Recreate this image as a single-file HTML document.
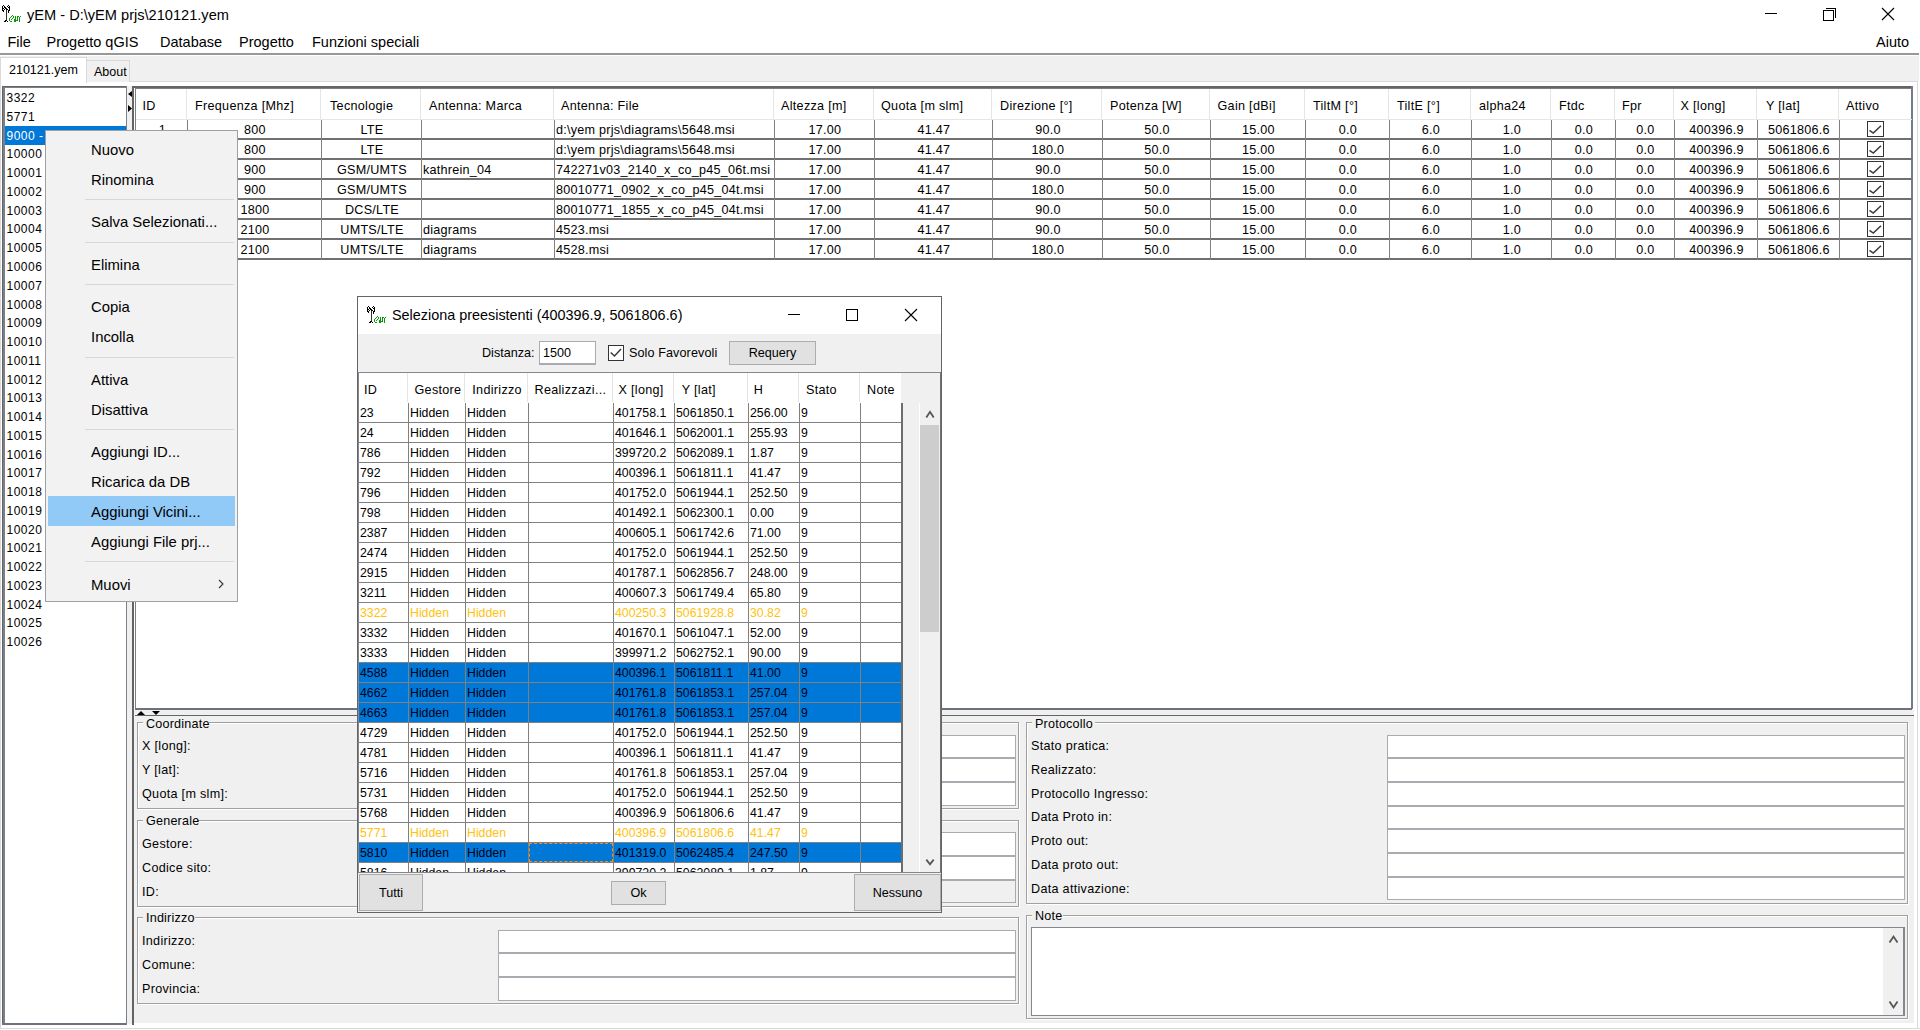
<!DOCTYPE html>
<html><head><meta charset="utf-8"><title>yEM</title>
<style>
html,body{margin:0;padding:0;}
body{width:1920px;height:1030px;overflow:hidden;position:relative;background:#fff;font-family:"Liberation Sans", sans-serif;color:#000;}
body div, body svg{position:absolute;}
body div{white-space:pre;}
</style></head><body>
<div style="left:0px;top:0px;width:1920px;height:53px;background:#fff"></div>
<div style="left:0px;top:53px;width:1919px;height:2px;background:#989898"></div>
<svg style="left:0px;top:0px" width="22" height="23" viewBox="0 0 22 23" shape-rendering="crispEdges"><g fill="#000"><rect x="2" y="6" width="1" height="5"/><rect x="3" y="5" width="1" height="1"/><rect x="4" y="6" width="1" height="2"/><rect x="3" y="8" width="1" height="1"/><rect x="4" y="9" width="1" height="1"/><rect x="3" y="10" width="1" height="2"/><rect x="9" y="6" width="1" height="5"/><rect x="8" y="5" width="1" height="1"/><rect x="7" y="6" width="1" height="1"/><rect x="8" y="7" width="1" height="1"/><rect x="7" y="9" width="1" height="1"/><rect x="8" y="10" width="1" height="3"/><rect x="5" y="7" width="1" height="2"/><rect x="6" y="8" width="1" height="1"/><rect x="6" y="9" width="1" height="1"/><rect x="4" y="21" width="2" height="1"/><rect x="5" y="20" width="2" height="1"/><rect x="7" y="21" width="1" height="1"/></g><rect x="6" y="10" width="1" height="10" fill="#3c3222"/><g fill="#089808"><rect x="12" y="15" width="1" height="1"/><rect x="11" y="16" width="1" height="1"/><rect x="13" y="16" width="1" height="2"/><rect x="10" y="17" width="1" height="1"/><rect x="12" y="18" width="1" height="1"/><rect x="9" y="18" width="1" height="3"/><rect x="11" y="19" width="1" height="1"/><rect x="10" y="21" width="2" height="1"/><rect x="15" y="16" width="1" height="6"/><rect x="14" y="19" width="1" height="3"/><rect x="16" y="20" width="1" height="1"/><rect x="17" y="16" width="1" height="5"/><rect x="18" y="16" width="1" height="1"/><rect x="19" y="17" width="1" height="5"/><rect x="20" y="16" width="1" height="1"/></g></svg>
<div style="left:27px;top:7.64px;font-size:14.6px;line-height:14.6px;color:#000;">yEM - D:\yEM prjs\210121.yem</div>
<div style="left:1765px;top:13px;width:12px;height:1px;background:#000"></div>
<div style="left:1823px;top:10px;width:9px;height:9px;border:1px solid #000;background:#fff"></div>
<div style="left:1826px;top:8px;width:9px;height:9px;border-top:1px solid #000;border-right:1px solid #000"></div>
<svg style="left:1881px;top:7px" width="14" height="14" viewBox="0 0 14 14"><path d="M1 1 L13 13 M13 1 L1 13" stroke="#000" stroke-width="1.1"/></svg>
<div style="left:7.5px;top:34.73px;font-size:14.5px;line-height:14.5px;color:#000;">File</div>
<div style="left:46.5px;top:34.73px;font-size:14.5px;line-height:14.5px;color:#000;">Progetto qGIS</div>
<div style="left:160px;top:34.73px;font-size:14.5px;line-height:14.5px;color:#000;">Database</div>
<div style="left:239px;top:34.73px;font-size:14.5px;line-height:14.5px;color:#000;">Progetto</div>
<div style="left:312px;top:34.73px;font-size:14.5px;line-height:14.5px;color:#000;">Funzioni speciali</div>
<div style="left:1876px;top:34.73px;font-size:14.5px;line-height:14.5px;color:#000;">Aiuto</div>
<div style="left:0px;top:56px;width:1919px;height:25px;background:#f0f0f0"></div>
<div style="left:0px;top:81px;width:1918px;height:948px;background:#fff"></div>
<div style="left:0px;top:81px;width:1px;height:948px;background:#d9d9d9"></div>
<div style="left:1917px;top:81px;width:1px;height:948px;background:#d9d9d9"></div>
<div style="left:0px;top:81px;width:1918px;height:1px;background:#d9d9d9"></div>
<div style="left:0px;top:1028px;width:1918px;height:1px;background:#d9d9d9"></div>
<div style="left:0px;top:57px;width:87px;height:26px;background:#fff;border:1px solid #d9d9d9;border-bottom:none;box-sizing:border-box"></div>
<div style="left:86px;top:60px;width:44px;height:22px;background:#f0f0f0;border:1px solid #d9d9d9;border-bottom:none;box-sizing:border-box"></div>
<div style="left:9px;top:64.42px;font-size:12.5px;line-height:12.5px;color:#000;">210121.yem</div>
<div style="left:94px;top:65.92px;font-size:12.5px;line-height:12.5px;color:#000;">About</div>
<div style="left:127px;top:86px;width:5px;height:938px;background:#f0f0f0"></div>
<div style="left:134px;top:710px;width:1780px;height:314px;background:#f0f0f0"></div>
<div style="left:134px;top:1023px;width:1780px;height:1px;background:#fff"></div>
<div style="left:2px;top:86px;width:125px;height:939px;background:#fff"></div>
<div style="left:2px;top:86px;width:1px;height:939px;background:#646464"></div>
<div style="left:3px;top:87px;width:2px;height:937px;background:#7a8089"></div>
<div style="left:2px;top:86px;width:125px;height:1px;background:#646464"></div>
<div style="left:3px;top:87px;width:124px;height:1px;background:#7a8089"></div>
<div style="left:2px;top:1023px;width:125px;height:2px;background:#6d737b"></div>
<div style="left:126px;top:86px;width:1px;height:939px;background:#7a8089"></div>
<div style="left:6.5px;top:92.14px;font-size:12px;line-height:12px;color:#000;letter-spacing:0.5px;">3322</div>
<div style="left:6.5px;top:110.9px;font-size:12px;line-height:12px;color:#000;letter-spacing:0.5px;">5771</div>
<div style="left:5px;top:126px;width:121px;height:19px;background:#0078d7"></div>
<div style="left:6.5px;top:129.66px;font-size:12px;line-height:12px;color:#fff;letter-spacing:0.5px;">9000 - </div>
<div style="left:6.5px;top:148.42px;font-size:12px;line-height:12px;color:#000;letter-spacing:0.5px;">10000</div>
<div style="left:6.5px;top:167.18px;font-size:12px;line-height:12px;color:#000;letter-spacing:0.5px;">10001</div>
<div style="left:6.5px;top:185.94px;font-size:12px;line-height:12px;color:#000;letter-spacing:0.5px;">10002</div>
<div style="left:6.5px;top:204.7px;font-size:12px;line-height:12px;color:#000;letter-spacing:0.5px;">10003</div>
<div style="left:6.5px;top:223.46px;font-size:12px;line-height:12px;color:#000;letter-spacing:0.5px;">10004</div>
<div style="left:6.5px;top:242.22px;font-size:12px;line-height:12px;color:#000;letter-spacing:0.5px;">10005</div>
<div style="left:6.5px;top:260.98px;font-size:12px;line-height:12px;color:#000;letter-spacing:0.5px;">10006</div>
<div style="left:6.5px;top:279.74px;font-size:12px;line-height:12px;color:#000;letter-spacing:0.5px;">10007</div>
<div style="left:6.5px;top:298.5px;font-size:12px;line-height:12px;color:#000;letter-spacing:0.5px;">10008</div>
<div style="left:6.5px;top:317.26px;font-size:12px;line-height:12px;color:#000;letter-spacing:0.5px;">10009</div>
<div style="left:6.5px;top:336.02px;font-size:12px;line-height:12px;color:#000;letter-spacing:0.5px;">10010</div>
<div style="left:6.5px;top:354.78px;font-size:12px;line-height:12px;color:#000;letter-spacing:0.5px;">10011</div>
<div style="left:6.5px;top:373.54px;font-size:12px;line-height:12px;color:#000;letter-spacing:0.5px;">10012</div>
<div style="left:6.5px;top:392.3px;font-size:12px;line-height:12px;color:#000;letter-spacing:0.5px;">10013</div>
<div style="left:6.5px;top:411.06px;font-size:12px;line-height:12px;color:#000;letter-spacing:0.5px;">10014</div>
<div style="left:6.5px;top:429.82px;font-size:12px;line-height:12px;color:#000;letter-spacing:0.5px;">10015</div>
<div style="left:6.5px;top:448.58px;font-size:12px;line-height:12px;color:#000;letter-spacing:0.5px;">10016</div>
<div style="left:6.5px;top:467.34px;font-size:12px;line-height:12px;color:#000;letter-spacing:0.5px;">10017</div>
<div style="left:6.5px;top:486.1px;font-size:12px;line-height:12px;color:#000;letter-spacing:0.5px;">10018</div>
<div style="left:6.5px;top:504.86px;font-size:12px;line-height:12px;color:#000;letter-spacing:0.5px;">10019</div>
<div style="left:6.5px;top:523.62px;font-size:12px;line-height:12px;color:#000;letter-spacing:0.5px;">10020</div>
<div style="left:6.5px;top:542.38px;font-size:12px;line-height:12px;color:#000;letter-spacing:0.5px;">10021</div>
<div style="left:6.5px;top:561.14px;font-size:12px;line-height:12px;color:#000;letter-spacing:0.5px;">10022</div>
<div style="left:6.5px;top:579.9px;font-size:12px;line-height:12px;color:#000;letter-spacing:0.5px;">10023</div>
<div style="left:6.5px;top:598.66px;font-size:12px;line-height:12px;color:#000;letter-spacing:0.5px;">10024</div>
<div style="left:6.5px;top:617.42px;font-size:12px;line-height:12px;color:#000;letter-spacing:0.5px;">10025</div>
<div style="left:6.5px;top:636.18px;font-size:12px;line-height:12px;color:#000;letter-spacing:0.5px;">10026</div>
<svg style="left:127px;top:90px" width="6" height="24" viewBox="0 0 6 24"><path d="M5 1 L1 4 L5 7 Z M1 15 L5 18.5 L1 22 Z" fill="#000"/></svg>
<div style="left:132px;top:86px;width:2px;height:939px;background:#646464"></div>
<div style="left:134px;top:86px;width:1779px;height:624px;background:#fff"></div>
<div style="left:132px;top:86px;width:1781px;height:2px;background:#646464"></div>
<div style="left:135px;top:88px;width:1777px;height:1px;background:#7a8089"></div>
<div style="left:135px;top:88px;width:1px;height:621px;background:#7a8089"></div>
<div style="left:1911px;top:86px;width:2px;height:623px;background:#767c87"></div>
<div style="left:135px;top:708px;width:1777px;height:2px;background:#6d737b"></div>
<div style="left:142.5px;top:100.33px;font-size:12.6px;line-height:12.6px;color:#000;letter-spacing:0.3px;">ID</div>
<div style="left:195px;top:100.33px;font-size:12.6px;line-height:12.6px;color:#000;letter-spacing:0.3px;">Frequenza [Mhz]</div>
<div style="left:186px;top:89px;width:1px;height:30px;background:#e5e5e5"></div>
<div style="left:330px;top:100.33px;font-size:12.6px;line-height:12.6px;color:#000;letter-spacing:0.3px;">Tecnologie</div>
<div style="left:320px;top:89px;width:1px;height:30px;background:#e5e5e5"></div>
<div style="left:429px;top:100.33px;font-size:12.6px;line-height:12.6px;color:#000;letter-spacing:0.3px;">Antenna: Marca</div>
<div style="left:420px;top:89px;width:1px;height:30px;background:#e5e5e5"></div>
<div style="left:561px;top:100.33px;font-size:12.6px;line-height:12.6px;color:#000;letter-spacing:0.3px;">Antenna: File</div>
<div style="left:553px;top:89px;width:1px;height:30px;background:#e5e5e5"></div>
<div style="left:781px;top:100.33px;font-size:12.6px;line-height:12.6px;color:#000;letter-spacing:0.3px;">Altezza [m]</div>
<div style="left:773px;top:89px;width:1px;height:30px;background:#e5e5e5"></div>
<div style="left:881px;top:100.33px;font-size:12.6px;line-height:12.6px;color:#000;letter-spacing:0.3px;">Quota [m slm]</div>
<div style="left:873px;top:89px;width:1px;height:30px;background:#e5e5e5"></div>
<div style="left:1000px;top:100.33px;font-size:12.6px;line-height:12.6px;color:#000;letter-spacing:0.3px;">Direzione [°]</div>
<div style="left:991px;top:89px;width:1px;height:30px;background:#e5e5e5"></div>
<div style="left:1110px;top:100.33px;font-size:12.6px;line-height:12.6px;color:#000;letter-spacing:0.3px;">Potenza [W]</div>
<div style="left:1101px;top:89px;width:1px;height:30px;background:#e5e5e5"></div>
<div style="left:1217.5px;top:100.33px;font-size:12.6px;line-height:12.6px;color:#000;letter-spacing:0.3px;">Gain [dBi]</div>
<div style="left:1209px;top:89px;width:1px;height:30px;background:#e5e5e5"></div>
<div style="left:1313px;top:100.33px;font-size:12.6px;line-height:12.6px;color:#000;letter-spacing:0.3px;">TiltM [°]</div>
<div style="left:1304px;top:89px;width:1px;height:30px;background:#e5e5e5"></div>
<div style="left:1397px;top:100.33px;font-size:12.6px;line-height:12.6px;color:#000;letter-spacing:0.3px;">TiltE [°]</div>
<div style="left:1388px;top:89px;width:1px;height:30px;background:#e5e5e5"></div>
<div style="left:1479px;top:100.33px;font-size:12.6px;line-height:12.6px;color:#000;letter-spacing:0.3px;">alpha24</div>
<div style="left:1470px;top:89px;width:1px;height:30px;background:#e5e5e5"></div>
<div style="left:1559px;top:100.33px;font-size:12.6px;line-height:12.6px;color:#000;letter-spacing:0.3px;">Ftdc</div>
<div style="left:1550px;top:89px;width:1px;height:30px;background:#e5e5e5"></div>
<div style="left:1622px;top:100.33px;font-size:12.6px;line-height:12.6px;color:#000;letter-spacing:0.3px;">Fpr</div>
<div style="left:1614px;top:89px;width:1px;height:30px;background:#e5e5e5"></div>
<div style="left:1680.5px;top:100.33px;font-size:12.6px;line-height:12.6px;color:#000;letter-spacing:0.3px;">X [long]</div>
<div style="left:1673px;top:89px;width:1px;height:30px;background:#e5e5e5"></div>
<div style="left:1766px;top:100.33px;font-size:12.6px;line-height:12.6px;color:#000;letter-spacing:0.3px;">Y [lat]</div>
<div style="left:1756px;top:89px;width:1px;height:30px;background:#e5e5e5"></div>
<div style="left:1846px;top:100.33px;font-size:12.6px;line-height:12.6px;color:#000;letter-spacing:0.3px;">Attivo</div>
<div style="left:1838px;top:89px;width:1px;height:30px;background:#e5e5e5"></div>
<div style="left:136px;top:119px;width:1776px;height:1px;background:#e5e5e5"></div>
<div style="left:137px;top:124.33px;font-size:12.6px;line-height:12.6px;color:#000;letter-spacing:0.25px;width:51px;text-align:center;">1</div>
<div style="left:188px;top:124.33px;font-size:12.6px;line-height:12.6px;color:#000;letter-spacing:0.25px;width:134px;text-align:center;">800</div>
<div style="left:322px;top:124.33px;font-size:12.6px;line-height:12.6px;color:#000;letter-spacing:0.25px;width:100px;text-align:center;">LTE</div>
<div style="left:556px;top:124.33px;font-size:12.6px;line-height:12.6px;color:#000;letter-spacing:0.25px;">d:\yem prjs\diagrams\5648.msi</div>
<div style="left:775px;top:124.33px;font-size:12.6px;line-height:12.6px;color:#000;letter-spacing:0.25px;width:100px;text-align:center;">17.00</div>
<div style="left:875px;top:124.33px;font-size:12.6px;line-height:12.6px;color:#000;letter-spacing:0.25px;width:118px;text-align:center;">41.47</div>
<div style="left:993px;top:124.33px;font-size:12.6px;line-height:12.6px;color:#000;letter-spacing:0.25px;width:110px;text-align:center;">90.0</div>
<div style="left:1103px;top:124.33px;font-size:12.6px;line-height:12.6px;color:#000;letter-spacing:0.25px;width:108px;text-align:center;">50.0</div>
<div style="left:1211px;top:124.33px;font-size:12.6px;line-height:12.6px;color:#000;letter-spacing:0.25px;width:95px;text-align:center;">15.00</div>
<div style="left:1306px;top:124.33px;font-size:12.6px;line-height:12.6px;color:#000;letter-spacing:0.25px;width:84px;text-align:center;">0.0</div>
<div style="left:1390px;top:124.33px;font-size:12.6px;line-height:12.6px;color:#000;letter-spacing:0.25px;width:82px;text-align:center;">6.0</div>
<div style="left:1472px;top:124.33px;font-size:12.6px;line-height:12.6px;color:#000;letter-spacing:0.25px;width:80px;text-align:center;">1.0</div>
<div style="left:1552px;top:124.33px;font-size:12.6px;line-height:12.6px;color:#000;letter-spacing:0.25px;width:64px;text-align:center;">0.0</div>
<div style="left:1616px;top:124.33px;font-size:12.6px;line-height:12.6px;color:#000;letter-spacing:0.25px;width:59px;text-align:center;">0.0</div>
<div style="left:1675px;top:124.33px;font-size:12.6px;line-height:12.6px;color:#000;letter-spacing:0.25px;width:83px;text-align:center;">400396.9</div>
<div style="left:1758px;top:124.33px;font-size:12.6px;line-height:12.6px;color:#000;letter-spacing:0.25px;width:82px;text-align:center;">5061806.6</div>
<div style="left:1867px;top:121px;width:17px;height:16px;border:1px solid #333;background:#fff;box-sizing:border-box"></div>
<svg style="left:1867px;top:121px" width="17" height="16" viewBox="0 0 17 16"><path d="M2.5 9.3 L6.3 12 L14 4.7" stroke="#3a3a3a" stroke-width="1.5" fill="none"/></svg>
<div style="left:136px;top:138px;width:1776px;height:2px;background:#707070"></div>
<div style="left:137px;top:144.33px;font-size:12.6px;line-height:12.6px;color:#000;letter-spacing:0.25px;width:51px;text-align:center;">2</div>
<div style="left:188px;top:144.33px;font-size:12.6px;line-height:12.6px;color:#000;letter-spacing:0.25px;width:134px;text-align:center;">800</div>
<div style="left:322px;top:144.33px;font-size:12.6px;line-height:12.6px;color:#000;letter-spacing:0.25px;width:100px;text-align:center;">LTE</div>
<div style="left:556px;top:144.33px;font-size:12.6px;line-height:12.6px;color:#000;letter-spacing:0.25px;">d:\yem prjs\diagrams\5648.msi</div>
<div style="left:775px;top:144.33px;font-size:12.6px;line-height:12.6px;color:#000;letter-spacing:0.25px;width:100px;text-align:center;">17.00</div>
<div style="left:875px;top:144.33px;font-size:12.6px;line-height:12.6px;color:#000;letter-spacing:0.25px;width:118px;text-align:center;">41.47</div>
<div style="left:993px;top:144.33px;font-size:12.6px;line-height:12.6px;color:#000;letter-spacing:0.25px;width:110px;text-align:center;">180.0</div>
<div style="left:1103px;top:144.33px;font-size:12.6px;line-height:12.6px;color:#000;letter-spacing:0.25px;width:108px;text-align:center;">50.0</div>
<div style="left:1211px;top:144.33px;font-size:12.6px;line-height:12.6px;color:#000;letter-spacing:0.25px;width:95px;text-align:center;">15.00</div>
<div style="left:1306px;top:144.33px;font-size:12.6px;line-height:12.6px;color:#000;letter-spacing:0.25px;width:84px;text-align:center;">0.0</div>
<div style="left:1390px;top:144.33px;font-size:12.6px;line-height:12.6px;color:#000;letter-spacing:0.25px;width:82px;text-align:center;">6.0</div>
<div style="left:1472px;top:144.33px;font-size:12.6px;line-height:12.6px;color:#000;letter-spacing:0.25px;width:80px;text-align:center;">1.0</div>
<div style="left:1552px;top:144.33px;font-size:12.6px;line-height:12.6px;color:#000;letter-spacing:0.25px;width:64px;text-align:center;">0.0</div>
<div style="left:1616px;top:144.33px;font-size:12.6px;line-height:12.6px;color:#000;letter-spacing:0.25px;width:59px;text-align:center;">0.0</div>
<div style="left:1675px;top:144.33px;font-size:12.6px;line-height:12.6px;color:#000;letter-spacing:0.25px;width:83px;text-align:center;">400396.9</div>
<div style="left:1758px;top:144.33px;font-size:12.6px;line-height:12.6px;color:#000;letter-spacing:0.25px;width:82px;text-align:center;">5061806.6</div>
<div style="left:1867px;top:141px;width:17px;height:16px;border:1px solid #333;background:#fff;box-sizing:border-box"></div>
<svg style="left:1867px;top:141px" width="17" height="16" viewBox="0 0 17 16"><path d="M2.5 9.3 L6.3 12 L14 4.7" stroke="#3a3a3a" stroke-width="1.5" fill="none"/></svg>
<div style="left:136px;top:158px;width:1776px;height:2px;background:#707070"></div>
<div style="left:137px;top:164.33px;font-size:12.6px;line-height:12.6px;color:#000;letter-spacing:0.25px;width:51px;text-align:center;">3</div>
<div style="left:188px;top:164.33px;font-size:12.6px;line-height:12.6px;color:#000;letter-spacing:0.25px;width:134px;text-align:center;">900</div>
<div style="left:322px;top:164.33px;font-size:12.6px;line-height:12.6px;color:#000;letter-spacing:0.25px;width:100px;text-align:center;">GSM/UMTS</div>
<div style="left:423px;top:164.33px;font-size:12.6px;line-height:12.6px;color:#000;letter-spacing:0.25px;">kathrein_04</div>
<div style="left:556px;top:164.33px;font-size:12.6px;line-height:12.6px;color:#000;letter-spacing:0.25px;">742271v03_2140_x_co_p45_06t.msi</div>
<div style="left:775px;top:164.33px;font-size:12.6px;line-height:12.6px;color:#000;letter-spacing:0.25px;width:100px;text-align:center;">17.00</div>
<div style="left:875px;top:164.33px;font-size:12.6px;line-height:12.6px;color:#000;letter-spacing:0.25px;width:118px;text-align:center;">41.47</div>
<div style="left:993px;top:164.33px;font-size:12.6px;line-height:12.6px;color:#000;letter-spacing:0.25px;width:110px;text-align:center;">90.0</div>
<div style="left:1103px;top:164.33px;font-size:12.6px;line-height:12.6px;color:#000;letter-spacing:0.25px;width:108px;text-align:center;">50.0</div>
<div style="left:1211px;top:164.33px;font-size:12.6px;line-height:12.6px;color:#000;letter-spacing:0.25px;width:95px;text-align:center;">15.00</div>
<div style="left:1306px;top:164.33px;font-size:12.6px;line-height:12.6px;color:#000;letter-spacing:0.25px;width:84px;text-align:center;">0.0</div>
<div style="left:1390px;top:164.33px;font-size:12.6px;line-height:12.6px;color:#000;letter-spacing:0.25px;width:82px;text-align:center;">6.0</div>
<div style="left:1472px;top:164.33px;font-size:12.6px;line-height:12.6px;color:#000;letter-spacing:0.25px;width:80px;text-align:center;">1.0</div>
<div style="left:1552px;top:164.33px;font-size:12.6px;line-height:12.6px;color:#000;letter-spacing:0.25px;width:64px;text-align:center;">0.0</div>
<div style="left:1616px;top:164.33px;font-size:12.6px;line-height:12.6px;color:#000;letter-spacing:0.25px;width:59px;text-align:center;">0.0</div>
<div style="left:1675px;top:164.33px;font-size:12.6px;line-height:12.6px;color:#000;letter-spacing:0.25px;width:83px;text-align:center;">400396.9</div>
<div style="left:1758px;top:164.33px;font-size:12.6px;line-height:12.6px;color:#000;letter-spacing:0.25px;width:82px;text-align:center;">5061806.6</div>
<div style="left:1867px;top:161px;width:17px;height:16px;border:1px solid #333;background:#fff;box-sizing:border-box"></div>
<svg style="left:1867px;top:161px" width="17" height="16" viewBox="0 0 17 16"><path d="M2.5 9.3 L6.3 12 L14 4.7" stroke="#3a3a3a" stroke-width="1.5" fill="none"/></svg>
<div style="left:136px;top:178px;width:1776px;height:2px;background:#707070"></div>
<div style="left:137px;top:184.33px;font-size:12.6px;line-height:12.6px;color:#000;letter-spacing:0.25px;width:51px;text-align:center;">4</div>
<div style="left:188px;top:184.33px;font-size:12.6px;line-height:12.6px;color:#000;letter-spacing:0.25px;width:134px;text-align:center;">900</div>
<div style="left:322px;top:184.33px;font-size:12.6px;line-height:12.6px;color:#000;letter-spacing:0.25px;width:100px;text-align:center;">GSM/UMTS</div>
<div style="left:556px;top:184.33px;font-size:12.6px;line-height:12.6px;color:#000;letter-spacing:0.25px;">80010771_0902_x_co_p45_04t.msi</div>
<div style="left:775px;top:184.33px;font-size:12.6px;line-height:12.6px;color:#000;letter-spacing:0.25px;width:100px;text-align:center;">17.00</div>
<div style="left:875px;top:184.33px;font-size:12.6px;line-height:12.6px;color:#000;letter-spacing:0.25px;width:118px;text-align:center;">41.47</div>
<div style="left:993px;top:184.33px;font-size:12.6px;line-height:12.6px;color:#000;letter-spacing:0.25px;width:110px;text-align:center;">180.0</div>
<div style="left:1103px;top:184.33px;font-size:12.6px;line-height:12.6px;color:#000;letter-spacing:0.25px;width:108px;text-align:center;">50.0</div>
<div style="left:1211px;top:184.33px;font-size:12.6px;line-height:12.6px;color:#000;letter-spacing:0.25px;width:95px;text-align:center;">15.00</div>
<div style="left:1306px;top:184.33px;font-size:12.6px;line-height:12.6px;color:#000;letter-spacing:0.25px;width:84px;text-align:center;">0.0</div>
<div style="left:1390px;top:184.33px;font-size:12.6px;line-height:12.6px;color:#000;letter-spacing:0.25px;width:82px;text-align:center;">6.0</div>
<div style="left:1472px;top:184.33px;font-size:12.6px;line-height:12.6px;color:#000;letter-spacing:0.25px;width:80px;text-align:center;">1.0</div>
<div style="left:1552px;top:184.33px;font-size:12.6px;line-height:12.6px;color:#000;letter-spacing:0.25px;width:64px;text-align:center;">0.0</div>
<div style="left:1616px;top:184.33px;font-size:12.6px;line-height:12.6px;color:#000;letter-spacing:0.25px;width:59px;text-align:center;">0.0</div>
<div style="left:1675px;top:184.33px;font-size:12.6px;line-height:12.6px;color:#000;letter-spacing:0.25px;width:83px;text-align:center;">400396.9</div>
<div style="left:1758px;top:184.33px;font-size:12.6px;line-height:12.6px;color:#000;letter-spacing:0.25px;width:82px;text-align:center;">5061806.6</div>
<div style="left:1867px;top:181px;width:17px;height:16px;border:1px solid #333;background:#fff;box-sizing:border-box"></div>
<svg style="left:1867px;top:181px" width="17" height="16" viewBox="0 0 17 16"><path d="M2.5 9.3 L6.3 12 L14 4.7" stroke="#3a3a3a" stroke-width="1.5" fill="none"/></svg>
<div style="left:136px;top:198px;width:1776px;height:2px;background:#707070"></div>
<div style="left:137px;top:204.33px;font-size:12.6px;line-height:12.6px;color:#000;letter-spacing:0.25px;width:51px;text-align:center;">5</div>
<div style="left:188px;top:204.33px;font-size:12.6px;line-height:12.6px;color:#000;letter-spacing:0.25px;width:134px;text-align:center;">1800</div>
<div style="left:322px;top:204.33px;font-size:12.6px;line-height:12.6px;color:#000;letter-spacing:0.25px;width:100px;text-align:center;">DCS/LTE</div>
<div style="left:556px;top:204.33px;font-size:12.6px;line-height:12.6px;color:#000;letter-spacing:0.25px;">80010771_1855_x_co_p45_04t.msi</div>
<div style="left:775px;top:204.33px;font-size:12.6px;line-height:12.6px;color:#000;letter-spacing:0.25px;width:100px;text-align:center;">17.00</div>
<div style="left:875px;top:204.33px;font-size:12.6px;line-height:12.6px;color:#000;letter-spacing:0.25px;width:118px;text-align:center;">41.47</div>
<div style="left:993px;top:204.33px;font-size:12.6px;line-height:12.6px;color:#000;letter-spacing:0.25px;width:110px;text-align:center;">90.0</div>
<div style="left:1103px;top:204.33px;font-size:12.6px;line-height:12.6px;color:#000;letter-spacing:0.25px;width:108px;text-align:center;">50.0</div>
<div style="left:1211px;top:204.33px;font-size:12.6px;line-height:12.6px;color:#000;letter-spacing:0.25px;width:95px;text-align:center;">15.00</div>
<div style="left:1306px;top:204.33px;font-size:12.6px;line-height:12.6px;color:#000;letter-spacing:0.25px;width:84px;text-align:center;">0.0</div>
<div style="left:1390px;top:204.33px;font-size:12.6px;line-height:12.6px;color:#000;letter-spacing:0.25px;width:82px;text-align:center;">6.0</div>
<div style="left:1472px;top:204.33px;font-size:12.6px;line-height:12.6px;color:#000;letter-spacing:0.25px;width:80px;text-align:center;">1.0</div>
<div style="left:1552px;top:204.33px;font-size:12.6px;line-height:12.6px;color:#000;letter-spacing:0.25px;width:64px;text-align:center;">0.0</div>
<div style="left:1616px;top:204.33px;font-size:12.6px;line-height:12.6px;color:#000;letter-spacing:0.25px;width:59px;text-align:center;">0.0</div>
<div style="left:1675px;top:204.33px;font-size:12.6px;line-height:12.6px;color:#000;letter-spacing:0.25px;width:83px;text-align:center;">400396.9</div>
<div style="left:1758px;top:204.33px;font-size:12.6px;line-height:12.6px;color:#000;letter-spacing:0.25px;width:82px;text-align:center;">5061806.6</div>
<div style="left:1867px;top:201px;width:17px;height:16px;border:1px solid #333;background:#fff;box-sizing:border-box"></div>
<svg style="left:1867px;top:201px" width="17" height="16" viewBox="0 0 17 16"><path d="M2.5 9.3 L6.3 12 L14 4.7" stroke="#3a3a3a" stroke-width="1.5" fill="none"/></svg>
<div style="left:136px;top:218px;width:1776px;height:2px;background:#707070"></div>
<div style="left:137px;top:224.33px;font-size:12.6px;line-height:12.6px;color:#000;letter-spacing:0.25px;width:51px;text-align:center;">6</div>
<div style="left:188px;top:224.33px;font-size:12.6px;line-height:12.6px;color:#000;letter-spacing:0.25px;width:134px;text-align:center;">2100</div>
<div style="left:322px;top:224.33px;font-size:12.6px;line-height:12.6px;color:#000;letter-spacing:0.25px;width:100px;text-align:center;">UMTS/LTE</div>
<div style="left:423px;top:224.33px;font-size:12.6px;line-height:12.6px;color:#000;letter-spacing:0.25px;">diagrams</div>
<div style="left:556px;top:224.33px;font-size:12.6px;line-height:12.6px;color:#000;letter-spacing:0.25px;">4523.msi</div>
<div style="left:775px;top:224.33px;font-size:12.6px;line-height:12.6px;color:#000;letter-spacing:0.25px;width:100px;text-align:center;">17.00</div>
<div style="left:875px;top:224.33px;font-size:12.6px;line-height:12.6px;color:#000;letter-spacing:0.25px;width:118px;text-align:center;">41.47</div>
<div style="left:993px;top:224.33px;font-size:12.6px;line-height:12.6px;color:#000;letter-spacing:0.25px;width:110px;text-align:center;">90.0</div>
<div style="left:1103px;top:224.33px;font-size:12.6px;line-height:12.6px;color:#000;letter-spacing:0.25px;width:108px;text-align:center;">50.0</div>
<div style="left:1211px;top:224.33px;font-size:12.6px;line-height:12.6px;color:#000;letter-spacing:0.25px;width:95px;text-align:center;">15.00</div>
<div style="left:1306px;top:224.33px;font-size:12.6px;line-height:12.6px;color:#000;letter-spacing:0.25px;width:84px;text-align:center;">0.0</div>
<div style="left:1390px;top:224.33px;font-size:12.6px;line-height:12.6px;color:#000;letter-spacing:0.25px;width:82px;text-align:center;">6.0</div>
<div style="left:1472px;top:224.33px;font-size:12.6px;line-height:12.6px;color:#000;letter-spacing:0.25px;width:80px;text-align:center;">1.0</div>
<div style="left:1552px;top:224.33px;font-size:12.6px;line-height:12.6px;color:#000;letter-spacing:0.25px;width:64px;text-align:center;">0.0</div>
<div style="left:1616px;top:224.33px;font-size:12.6px;line-height:12.6px;color:#000;letter-spacing:0.25px;width:59px;text-align:center;">0.0</div>
<div style="left:1675px;top:224.33px;font-size:12.6px;line-height:12.6px;color:#000;letter-spacing:0.25px;width:83px;text-align:center;">400396.9</div>
<div style="left:1758px;top:224.33px;font-size:12.6px;line-height:12.6px;color:#000;letter-spacing:0.25px;width:82px;text-align:center;">5061806.6</div>
<div style="left:1867px;top:221px;width:17px;height:16px;border:1px solid #333;background:#fff;box-sizing:border-box"></div>
<svg style="left:1867px;top:221px" width="17" height="16" viewBox="0 0 17 16"><path d="M2.5 9.3 L6.3 12 L14 4.7" stroke="#3a3a3a" stroke-width="1.5" fill="none"/></svg>
<div style="left:136px;top:238px;width:1776px;height:2px;background:#707070"></div>
<div style="left:137px;top:244.33px;font-size:12.6px;line-height:12.6px;color:#000;letter-spacing:0.25px;width:51px;text-align:center;">7</div>
<div style="left:188px;top:244.33px;font-size:12.6px;line-height:12.6px;color:#000;letter-spacing:0.25px;width:134px;text-align:center;">2100</div>
<div style="left:322px;top:244.33px;font-size:12.6px;line-height:12.6px;color:#000;letter-spacing:0.25px;width:100px;text-align:center;">UMTS/LTE</div>
<div style="left:423px;top:244.33px;font-size:12.6px;line-height:12.6px;color:#000;letter-spacing:0.25px;">diagrams</div>
<div style="left:556px;top:244.33px;font-size:12.6px;line-height:12.6px;color:#000;letter-spacing:0.25px;">4528.msi</div>
<div style="left:775px;top:244.33px;font-size:12.6px;line-height:12.6px;color:#000;letter-spacing:0.25px;width:100px;text-align:center;">17.00</div>
<div style="left:875px;top:244.33px;font-size:12.6px;line-height:12.6px;color:#000;letter-spacing:0.25px;width:118px;text-align:center;">41.47</div>
<div style="left:993px;top:244.33px;font-size:12.6px;line-height:12.6px;color:#000;letter-spacing:0.25px;width:110px;text-align:center;">180.0</div>
<div style="left:1103px;top:244.33px;font-size:12.6px;line-height:12.6px;color:#000;letter-spacing:0.25px;width:108px;text-align:center;">50.0</div>
<div style="left:1211px;top:244.33px;font-size:12.6px;line-height:12.6px;color:#000;letter-spacing:0.25px;width:95px;text-align:center;">15.00</div>
<div style="left:1306px;top:244.33px;font-size:12.6px;line-height:12.6px;color:#000;letter-spacing:0.25px;width:84px;text-align:center;">0.0</div>
<div style="left:1390px;top:244.33px;font-size:12.6px;line-height:12.6px;color:#000;letter-spacing:0.25px;width:82px;text-align:center;">6.0</div>
<div style="left:1472px;top:244.33px;font-size:12.6px;line-height:12.6px;color:#000;letter-spacing:0.25px;width:80px;text-align:center;">1.0</div>
<div style="left:1552px;top:244.33px;font-size:12.6px;line-height:12.6px;color:#000;letter-spacing:0.25px;width:64px;text-align:center;">0.0</div>
<div style="left:1616px;top:244.33px;font-size:12.6px;line-height:12.6px;color:#000;letter-spacing:0.25px;width:59px;text-align:center;">0.0</div>
<div style="left:1675px;top:244.33px;font-size:12.6px;line-height:12.6px;color:#000;letter-spacing:0.25px;width:83px;text-align:center;">400396.9</div>
<div style="left:1758px;top:244.33px;font-size:12.6px;line-height:12.6px;color:#000;letter-spacing:0.25px;width:82px;text-align:center;">5061806.6</div>
<div style="left:1867px;top:241px;width:17px;height:16px;border:1px solid #333;background:#fff;box-sizing:border-box"></div>
<svg style="left:1867px;top:241px" width="17" height="16" viewBox="0 0 17 16"><path d="M2.5 9.3 L6.3 12 L14 4.7" stroke="#3a3a3a" stroke-width="1.5" fill="none"/></svg>
<div style="left:136px;top:258px;width:1776px;height:2px;background:#707070"></div>
<div style="left:187px;top:120px;width:1px;height:140px;background:#808080"></div>
<div style="left:321px;top:120px;width:1px;height:140px;background:#808080"></div>
<div style="left:421px;top:120px;width:1px;height:140px;background:#808080"></div>
<div style="left:554px;top:120px;width:1px;height:140px;background:#808080"></div>
<div style="left:774px;top:120px;width:1px;height:140px;background:#808080"></div>
<div style="left:874px;top:120px;width:1px;height:140px;background:#808080"></div>
<div style="left:992px;top:120px;width:1px;height:140px;background:#808080"></div>
<div style="left:1102px;top:120px;width:1px;height:140px;background:#808080"></div>
<div style="left:1210px;top:120px;width:1px;height:140px;background:#808080"></div>
<div style="left:1305px;top:120px;width:1px;height:140px;background:#808080"></div>
<div style="left:1389px;top:120px;width:1px;height:140px;background:#808080"></div>
<div style="left:1471px;top:120px;width:1px;height:140px;background:#808080"></div>
<div style="left:1551px;top:120px;width:1px;height:140px;background:#808080"></div>
<div style="left:1615px;top:120px;width:1px;height:140px;background:#808080"></div>
<div style="left:1674px;top:120px;width:1px;height:140px;background:#808080"></div>
<div style="left:1757px;top:120px;width:1px;height:140px;background:#808080"></div>
<div style="left:1839px;top:120px;width:1px;height:140px;background:#808080"></div>
<svg style="left:136px;top:710px" width="26" height="6" viewBox="0 0 26 6"><path d="M1 5 L5 1 L9 5 Z M16 1 L24 1 L20 5 Z" fill="#000"/></svg>
<div style="left:135px;top:715px;width:1779px;height:1px;background:#646464"></div>
<div style="left:137px;top:722px;width:882px;height:87px;border:1px solid #a0a0a0;box-shadow:inset 1px 1px 0 #fff, 1px 1px 0 #fff;box-sizing:border-box"></div>
<div style="left:143px;top:721px;width:66px;height:4px;background:#f0f0f0"></div>
<div style="left:146px;top:718.33px;font-size:12.6px;line-height:12.6px;color:#000;letter-spacing:0.2px;">Coordinate</div>
<div style="left:498px;top:735px;width:518px;height:23px;background:#fff;border:1px solid #a9abb0;box-sizing:border-box"></div>
<div style="left:498px;top:758px;width:518px;height:24px;background:#fff;border:1px solid #a9abb0;box-sizing:border-box"></div>
<div style="left:498px;top:782px;width:518px;height:24px;background:#fff;border:1px solid #a9abb0;box-sizing:border-box"></div>
<div style="left:142px;top:739.83px;font-size:12.6px;line-height:12.6px;color:#000;letter-spacing:0.3px;">X [long]:</div>
<div style="left:142px;top:764.33px;font-size:12.6px;line-height:12.6px;color:#000;letter-spacing:0.3px;">Y [lat]:</div>
<div style="left:142px;top:788.33px;font-size:12.6px;line-height:12.6px;color:#000;letter-spacing:0.3px;">Quota [m slm]:</div>
<div style="left:137px;top:820px;width:882px;height:87px;border:1px solid #a0a0a0;box-shadow:inset 1px 1px 0 #fff, 1px 1px 0 #fff;box-sizing:border-box"></div>
<div style="left:143px;top:819px;width:54px;height:4px;background:#f0f0f0"></div>
<div style="left:146px;top:815.33px;font-size:12.6px;line-height:12.6px;color:#000;letter-spacing:0.2px;">Generale</div>
<div style="left:498px;top:832px;width:518px;height:24px;background:#fff;border:1px solid #a9abb0;box-sizing:border-box"></div>
<div style="left:498px;top:856px;width:518px;height:24px;background:#fff;border:1px solid #a9abb0;box-sizing:border-box"></div>
<div style="left:498px;top:880px;width:518px;height:23px;background:#f0f0f0;border:1px solid #a9abb0;box-sizing:border-box"></div>
<div style="left:142px;top:838.33px;font-size:12.6px;line-height:12.6px;color:#000;letter-spacing:0.3px;">Gestore:</div>
<div style="left:142px;top:861.83px;font-size:12.6px;line-height:12.6px;color:#000;letter-spacing:0.3px;">Codice sito:</div>
<div style="left:142px;top:885.83px;font-size:12.6px;line-height:12.6px;color:#000;letter-spacing:0.3px;">ID:</div>
<div style="left:137px;top:917px;width:882px;height:87px;border:1px solid #a0a0a0;box-shadow:inset 1px 1px 0 #fff, 1px 1px 0 #fff;box-sizing:border-box"></div>
<div style="left:143px;top:916px;width:52px;height:4px;background:#f0f0f0"></div>
<div style="left:146px;top:912.33px;font-size:12.6px;line-height:12.6px;color:#000;letter-spacing:0.2px;">Indirizzo</div>
<div style="left:498px;top:930px;width:518px;height:23px;background:#fff;border:1px solid #a9abb0;box-sizing:border-box"></div>
<div style="left:498px;top:953px;width:518px;height:24px;background:#fff;border:1px solid #a9abb0;box-sizing:border-box"></div>
<div style="left:498px;top:977px;width:518px;height:24px;background:#fff;border:1px solid #a9abb0;box-sizing:border-box"></div>
<div style="left:142px;top:935.33px;font-size:12.6px;line-height:12.6px;color:#000;letter-spacing:0.3px;">Indirizzo:</div>
<div style="left:142px;top:959.33px;font-size:12.6px;line-height:12.6px;color:#000;letter-spacing:0.3px;">Comune:</div>
<div style="left:142px;top:983.33px;font-size:12.6px;line-height:12.6px;color:#000;letter-spacing:0.3px;">Provincia:</div>
<div style="left:1026px;top:722px;width:882px;height:182px;border:1px solid #a0a0a0;box-shadow:inset 1px 1px 0 #fff, 1px 1px 0 #fff;box-sizing:border-box"></div>
<div style="left:1032px;top:721px;width:63px;height:4px;background:#f0f0f0"></div>
<div style="left:1035px;top:718.33px;font-size:12.6px;line-height:12.6px;color:#000;letter-spacing:0.2px;">Protocollo</div>
<div style="left:1387px;top:735px;width:518px;height:23px;background:#fff;border:1px solid #a9abb0;box-sizing:border-box"></div>
<div style="left:1387px;top:758px;width:518px;height:24px;background:#fff;border:1px solid #a9abb0;box-sizing:border-box"></div>
<div style="left:1387px;top:782px;width:518px;height:24px;background:#fff;border:1px solid #a9abb0;box-sizing:border-box"></div>
<div style="left:1387px;top:806px;width:518px;height:23px;background:#fff;border:1px solid #a9abb0;box-sizing:border-box"></div>
<div style="left:1387px;top:829px;width:518px;height:24px;background:#fff;border:1px solid #a9abb0;box-sizing:border-box"></div>
<div style="left:1387px;top:853px;width:518px;height:24px;background:#fff;border:1px solid #a9abb0;box-sizing:border-box"></div>
<div style="left:1387px;top:877px;width:518px;height:23px;background:#fff;border:1px solid #a9abb0;box-sizing:border-box"></div>
<div style="left:1031px;top:739.83px;font-size:12.6px;line-height:12.6px;color:#000;letter-spacing:0.3px;">Stato pratica:</div>
<div style="left:1031px;top:764.33px;font-size:12.6px;line-height:12.6px;color:#000;letter-spacing:0.3px;">Realizzato:</div>
<div style="left:1031px;top:788.33px;font-size:12.6px;line-height:12.6px;color:#000;letter-spacing:0.3px;">Protocollo Ingresso:</div>
<div style="left:1031px;top:811.33px;font-size:12.6px;line-height:12.6px;color:#000;letter-spacing:0.3px;">Data Proto in:</div>
<div style="left:1031px;top:835.33px;font-size:12.6px;line-height:12.6px;color:#000;letter-spacing:0.3px;">Proto out:</div>
<div style="left:1031px;top:859.33px;font-size:12.6px;line-height:12.6px;color:#000;letter-spacing:0.3px;">Data proto out:</div>
<div style="left:1031px;top:883.33px;font-size:12.6px;line-height:12.6px;color:#000;letter-spacing:0.3px;">Data attivazione:</div>
<div style="left:1026px;top:915px;width:882px;height:104px;border:1px solid #a0a0a0;box-shadow:inset 1px 1px 0 #fff, 1px 1px 0 #fff;box-sizing:border-box"></div>
<div style="left:1032px;top:914px;width:31px;height:4px;background:#f0f0f0"></div>
<div style="left:1035px;top:910.33px;font-size:12.6px;line-height:12.6px;color:#000;letter-spacing:0.2px;">Note</div>
<div style="left:1031px;top:927px;width:874px;height:89px;background:#fff;border:1px solid #828790;border-right-width:2px;box-sizing:border-box"></div>
<div style="left:1883px;top:928px;width:20px;height:87px;background:#f0f0f0"></div>
<svg style="left:1883px;top:928px" width="20" height="87" viewBox="0 0 20 87"><path d="M6.5 14.5 L10.5 8.5 L14.5 14.5 M6.5 73.5 L10.5 79.5 L14.5 73.5" stroke="#555" stroke-width="1.8" fill="none"/></svg>
<div style="left:0px;top:1028px;width:1920px;height:1px;background:#dadada"></div>
<div style="left:45px;top:130px;width:193px;height:472px;background:#f2f2f2;border:1px solid #a0a0a0;box-sizing:border-box"></div>
<div style="left:91px;top:142.3px;font-size:15px;line-height:15px;color:#000;transform:scaleX(0.99);transform-origin:0 0;">Nuovo</div>
<div style="left:91px;top:172.3px;font-size:15px;line-height:15px;color:#000;transform:scaleX(0.99);transform-origin:0 0;">Rinomina</div>
<div style="left:85px;top:199px;width:149px;height:1px;background:#d7d7d7"></div>
<div style="left:91px;top:214.3px;font-size:15px;line-height:15px;color:#000;transform:scaleX(0.99);transform-origin:0 0;">Salva Selezionati...</div>
<div style="left:85px;top:242px;width:149px;height:1px;background:#d7d7d7"></div>
<div style="left:91px;top:257.3px;font-size:15px;line-height:15px;color:#000;transform:scaleX(0.99);transform-origin:0 0;">Elimina</div>
<div style="left:85px;top:284px;width:149px;height:1px;background:#d7d7d7"></div>
<div style="left:91px;top:299.3px;font-size:15px;line-height:15px;color:#000;transform:scaleX(0.99);transform-origin:0 0;">Copia</div>
<div style="left:91px;top:329.3px;font-size:15px;line-height:15px;color:#000;transform:scaleX(0.99);transform-origin:0 0;">Incolla</div>
<div style="left:85px;top:357px;width:149px;height:1px;background:#d7d7d7"></div>
<div style="left:91px;top:372.3px;font-size:15px;line-height:15px;color:#000;transform:scaleX(0.99);transform-origin:0 0;">Attiva</div>
<div style="left:91px;top:402.3px;font-size:15px;line-height:15px;color:#000;transform:scaleX(0.99);transform-origin:0 0;">Disattiva</div>
<div style="left:85px;top:429px;width:149px;height:1px;background:#d7d7d7"></div>
<div style="left:91px;top:444.3px;font-size:15px;line-height:15px;color:#000;transform:scaleX(0.99);transform-origin:0 0;">Aggiungi ID...</div>
<div style="left:91px;top:474.3px;font-size:15px;line-height:15px;color:#000;transform:scaleX(0.99);transform-origin:0 0;">Ricarica da DB</div>
<div style="left:48px;top:496px;width:187px;height:30px;background:#91c9f7"></div>
<div style="left:91px;top:504.3px;font-size:15px;line-height:15px;color:#000;transform:scaleX(0.99);transform-origin:0 0;">Aggiungi Vicini...</div>
<div style="left:91px;top:534.3px;font-size:15px;line-height:15px;color:#000;transform:scaleX(0.99);transform-origin:0 0;">Aggiungi File prj...</div>
<div style="left:85px;top:561px;width:149px;height:1px;background:#d7d7d7"></div>
<div style="left:91px;top:577.3px;font-size:15px;line-height:15px;color:#000;transform:scaleX(0.99);transform-origin:0 0;">Muovi</div>
<svg style="left:217px;top:578px" width="8" height="12" viewBox="0 0 8 12"><path d="M2 2 L6 6 L2 10" stroke="#333" stroke-width="1.1" fill="none"/></svg>
<div style="left:357px;top:296px;width:585px;height:617px;background:#f0f0f0;border:1px solid #646464;box-sizing:border-box"></div>
<div style="left:358px;top:297px;width:583px;height:37px;background:#fff"></div>
<svg style="left:365px;top:301px" width="22" height="23" viewBox="0 0 22 23" shape-rendering="crispEdges"><g fill="#000"><rect x="2" y="6" width="1" height="5"/><rect x="3" y="5" width="1" height="1"/><rect x="4" y="6" width="1" height="2"/><rect x="3" y="8" width="1" height="1"/><rect x="4" y="9" width="1" height="1"/><rect x="3" y="10" width="1" height="2"/><rect x="9" y="6" width="1" height="5"/><rect x="8" y="5" width="1" height="1"/><rect x="7" y="6" width="1" height="1"/><rect x="8" y="7" width="1" height="1"/><rect x="7" y="9" width="1" height="1"/><rect x="8" y="10" width="1" height="3"/><rect x="5" y="7" width="1" height="2"/><rect x="6" y="8" width="1" height="1"/><rect x="6" y="9" width="1" height="1"/><rect x="4" y="21" width="2" height="1"/><rect x="5" y="20" width="2" height="1"/><rect x="7" y="21" width="1" height="1"/></g><rect x="6" y="10" width="1" height="10" fill="#3c3222"/><g fill="#089808"><rect x="12" y="15" width="1" height="1"/><rect x="11" y="16" width="1" height="1"/><rect x="13" y="16" width="1" height="2"/><rect x="10" y="17" width="1" height="1"/><rect x="12" y="18" width="1" height="1"/><rect x="9" y="18" width="1" height="3"/><rect x="11" y="19" width="1" height="1"/><rect x="10" y="21" width="2" height="1"/><rect x="15" y="16" width="1" height="6"/><rect x="14" y="19" width="1" height="3"/><rect x="16" y="20" width="1" height="1"/><rect x="17" y="16" width="1" height="5"/><rect x="18" y="16" width="1" height="1"/><rect x="19" y="17" width="1" height="5"/><rect x="20" y="16" width="1" height="1"/></g></svg>
<div style="left:392px;top:308.31px;font-size:14.4px;line-height:14.4px;color:#000;">Seleziona preesistenti (400396.9, 5061806.6)</div>
<div style="left:788px;top:314px;width:12px;height:1px;background:#000"></div>
<div style="left:846px;top:309px;width:12px;height:12px;border:1px solid #000;box-sizing:border-box"></div>
<svg style="left:904px;top:308px" width="14" height="14" viewBox="0 0 14 14"><path d="M1 1 L13 13 M13 1 L1 13" stroke="#000" stroke-width="1.1"/></svg>
<div style="left:482px;top:347.33px;font-size:12.6px;line-height:12.6px;color:#000;">Distanza:</div>
<div style="left:539px;top:341px;width:57px;height:24px;background:#fff;border:1px solid #a9abb0;border-bottom-width:2px;box-sizing:border-box"></div>
<div style="left:543px;top:347.33px;font-size:12.6px;line-height:12.6px;color:#000;">1500</div>
<div style="left:608px;top:345px;width:16px;height:16px;background:#fff;border:1px solid #333;box-sizing:border-box"></div>
<svg style="left:608px;top:345px" width="16" height="16" viewBox="0 0 16 16"><path d="M2.7 7.5 L6.5 11 L13 4" stroke="#3a3a3a" stroke-width="1.5" fill="none"/></svg>
<div style="left:629px;top:347.33px;font-size:12.6px;line-height:12.6px;color:#000;letter-spacing:0.1px;">Solo Favorevoli</div>
<div style="left:729px;top:341px;width:87px;height:24px;background:#e1e1e1;border:1px solid #adadad;box-sizing:border-box"></div>
<div style="left:729px;top:347.33px;font-size:12.6px;line-height:12.6px;color:#000;width:87px;text-align:center;">Requery</div>
<div style="left:358px;top:372px;width:583px;height:501px;background:#f0f0f0"></div>
<div style="left:358px;top:372px;width:583px;height:1px;background:#828790"></div>
<div style="left:358px;top:372px;width:1px;height:501px;background:#828790"></div>
<div style="left:359px;top:373px;width:542px;height:30px;background:#fff"></div>
<div style="left:364px;top:383.83px;font-size:12.6px;line-height:12.6px;color:#000;letter-spacing:0.3px;">ID</div>
<div style="left:414.5px;top:383.83px;font-size:12.6px;line-height:12.6px;color:#000;letter-spacing:0.3px;">Gestore</div>
<div style="left:407px;top:373px;width:1px;height:29px;background:#e5e5e5"></div>
<div style="left:472.3px;top:383.83px;font-size:12.6px;line-height:12.6px;color:#000;letter-spacing:0.3px;">Indirizzo</div>
<div style="left:464px;top:373px;width:1px;height:29px;background:#e5e5e5"></div>
<div style="left:534.5px;top:383.83px;font-size:12.6px;line-height:12.6px;color:#000;letter-spacing:0.3px;">Realizzazi...</div>
<div style="left:527px;top:373px;width:1px;height:29px;background:#e5e5e5"></div>
<div style="left:618.5px;top:383.83px;font-size:12.6px;line-height:12.6px;color:#000;letter-spacing:0.3px;">X [long]</div>
<div style="left:612px;top:373px;width:1px;height:29px;background:#e5e5e5"></div>
<div style="left:681.8px;top:383.83px;font-size:12.6px;line-height:12.6px;color:#000;letter-spacing:0.3px;">Y [lat]</div>
<div style="left:673px;top:373px;width:1px;height:29px;background:#e5e5e5"></div>
<div style="left:753.7px;top:383.83px;font-size:12.6px;line-height:12.6px;color:#000;letter-spacing:0.3px;">H</div>
<div style="left:747px;top:373px;width:1px;height:29px;background:#e5e5e5"></div>
<div style="left:806px;top:383.83px;font-size:12.6px;line-height:12.6px;color:#000;letter-spacing:0.3px;">Stato</div>
<div style="left:798px;top:373px;width:1px;height:29px;background:#e5e5e5"></div>
<div style="left:867px;top:383.83px;font-size:12.6px;line-height:12.6px;color:#000;letter-spacing:0.3px;">Note</div>
<div style="left:859px;top:373px;width:1px;height:29px;background:#e5e5e5"></div>
<div style="left:359px;top:403px;width:543px;height:469px;overflow:hidden">
<div style="left:0;top:0px;width:543px;height:20px;background:#fff"></div>
<div style="left:1px;top:4.09px;font-size:12.3px;line-height:12.3px;color:#000;">23</div>
<div style="left:51px;top:4.09px;font-size:12.3px;line-height:12.3px;color:#000;">Hidden</div>
<div style="left:108px;top:4.09px;font-size:12.3px;line-height:12.3px;color:#000;">Hidden</div>
<div style="left:256px;top:4.09px;font-size:12.3px;line-height:12.3px;color:#000;">401758.1</div>
<div style="left:317px;top:4.09px;font-size:12.3px;line-height:12.3px;color:#000;">5061850.1</div>
<div style="left:391px;top:4.09px;font-size:12.3px;line-height:12.3px;color:#000;">256.00</div>
<div style="left:442px;top:4.09px;font-size:12.3px;line-height:12.3px;color:#000;">9</div>
<div style="left:0;top:19px;width:543px;height:1px;background:#808080"></div>
<div style="left:0;top:20px;width:543px;height:20px;background:#fff"></div>
<div style="left:1px;top:24.09px;font-size:12.3px;line-height:12.3px;color:#000;">24</div>
<div style="left:51px;top:24.09px;font-size:12.3px;line-height:12.3px;color:#000;">Hidden</div>
<div style="left:108px;top:24.09px;font-size:12.3px;line-height:12.3px;color:#000;">Hidden</div>
<div style="left:256px;top:24.09px;font-size:12.3px;line-height:12.3px;color:#000;">401646.1</div>
<div style="left:317px;top:24.09px;font-size:12.3px;line-height:12.3px;color:#000;">5062001.1</div>
<div style="left:391px;top:24.09px;font-size:12.3px;line-height:12.3px;color:#000;">255.93</div>
<div style="left:442px;top:24.09px;font-size:12.3px;line-height:12.3px;color:#000;">9</div>
<div style="left:0;top:39px;width:543px;height:1px;background:#808080"></div>
<div style="left:0;top:40px;width:543px;height:20px;background:#fff"></div>
<div style="left:1px;top:44.09px;font-size:12.3px;line-height:12.3px;color:#000;">786</div>
<div style="left:51px;top:44.09px;font-size:12.3px;line-height:12.3px;color:#000;">Hidden</div>
<div style="left:108px;top:44.09px;font-size:12.3px;line-height:12.3px;color:#000;">Hidden</div>
<div style="left:256px;top:44.09px;font-size:12.3px;line-height:12.3px;color:#000;">399720.2</div>
<div style="left:317px;top:44.09px;font-size:12.3px;line-height:12.3px;color:#000;">5062089.1</div>
<div style="left:391px;top:44.09px;font-size:12.3px;line-height:12.3px;color:#000;">1.87</div>
<div style="left:442px;top:44.09px;font-size:12.3px;line-height:12.3px;color:#000;">9</div>
<div style="left:0;top:59px;width:543px;height:1px;background:#808080"></div>
<div style="left:0;top:60px;width:543px;height:20px;background:#fff"></div>
<div style="left:1px;top:64.09px;font-size:12.3px;line-height:12.3px;color:#000;">792</div>
<div style="left:51px;top:64.09px;font-size:12.3px;line-height:12.3px;color:#000;">Hidden</div>
<div style="left:108px;top:64.09px;font-size:12.3px;line-height:12.3px;color:#000;">Hidden</div>
<div style="left:256px;top:64.09px;font-size:12.3px;line-height:12.3px;color:#000;">400396.1</div>
<div style="left:317px;top:64.09px;font-size:12.3px;line-height:12.3px;color:#000;">5061811.1</div>
<div style="left:391px;top:64.09px;font-size:12.3px;line-height:12.3px;color:#000;">41.47</div>
<div style="left:442px;top:64.09px;font-size:12.3px;line-height:12.3px;color:#000;">9</div>
<div style="left:0;top:79px;width:543px;height:1px;background:#808080"></div>
<div style="left:0;top:80px;width:543px;height:20px;background:#fff"></div>
<div style="left:1px;top:84.09px;font-size:12.3px;line-height:12.3px;color:#000;">796</div>
<div style="left:51px;top:84.09px;font-size:12.3px;line-height:12.3px;color:#000;">Hidden</div>
<div style="left:108px;top:84.09px;font-size:12.3px;line-height:12.3px;color:#000;">Hidden</div>
<div style="left:256px;top:84.09px;font-size:12.3px;line-height:12.3px;color:#000;">401752.0</div>
<div style="left:317px;top:84.09px;font-size:12.3px;line-height:12.3px;color:#000;">5061944.1</div>
<div style="left:391px;top:84.09px;font-size:12.3px;line-height:12.3px;color:#000;">252.50</div>
<div style="left:442px;top:84.09px;font-size:12.3px;line-height:12.3px;color:#000;">9</div>
<div style="left:0;top:99px;width:543px;height:1px;background:#808080"></div>
<div style="left:0;top:100px;width:543px;height:20px;background:#fff"></div>
<div style="left:1px;top:104.09px;font-size:12.3px;line-height:12.3px;color:#000;">798</div>
<div style="left:51px;top:104.09px;font-size:12.3px;line-height:12.3px;color:#000;">Hidden</div>
<div style="left:108px;top:104.09px;font-size:12.3px;line-height:12.3px;color:#000;">Hidden</div>
<div style="left:256px;top:104.09px;font-size:12.3px;line-height:12.3px;color:#000;">401492.1</div>
<div style="left:317px;top:104.09px;font-size:12.3px;line-height:12.3px;color:#000;">5062300.1</div>
<div style="left:391px;top:104.09px;font-size:12.3px;line-height:12.3px;color:#000;">0.00</div>
<div style="left:442px;top:104.09px;font-size:12.3px;line-height:12.3px;color:#000;">9</div>
<div style="left:0;top:119px;width:543px;height:1px;background:#808080"></div>
<div style="left:0;top:120px;width:543px;height:20px;background:#fff"></div>
<div style="left:1px;top:124.09px;font-size:12.3px;line-height:12.3px;color:#000;">2387</div>
<div style="left:51px;top:124.09px;font-size:12.3px;line-height:12.3px;color:#000;">Hidden</div>
<div style="left:108px;top:124.09px;font-size:12.3px;line-height:12.3px;color:#000;">Hidden</div>
<div style="left:256px;top:124.09px;font-size:12.3px;line-height:12.3px;color:#000;">400605.1</div>
<div style="left:317px;top:124.09px;font-size:12.3px;line-height:12.3px;color:#000;">5061742.6</div>
<div style="left:391px;top:124.09px;font-size:12.3px;line-height:12.3px;color:#000;">71.00</div>
<div style="left:442px;top:124.09px;font-size:12.3px;line-height:12.3px;color:#000;">9</div>
<div style="left:0;top:139px;width:543px;height:1px;background:#808080"></div>
<div style="left:0;top:140px;width:543px;height:20px;background:#fff"></div>
<div style="left:1px;top:144.09px;font-size:12.3px;line-height:12.3px;color:#000;">2474</div>
<div style="left:51px;top:144.09px;font-size:12.3px;line-height:12.3px;color:#000;">Hidden</div>
<div style="left:108px;top:144.09px;font-size:12.3px;line-height:12.3px;color:#000;">Hidden</div>
<div style="left:256px;top:144.09px;font-size:12.3px;line-height:12.3px;color:#000;">401752.0</div>
<div style="left:317px;top:144.09px;font-size:12.3px;line-height:12.3px;color:#000;">5061944.1</div>
<div style="left:391px;top:144.09px;font-size:12.3px;line-height:12.3px;color:#000;">252.50</div>
<div style="left:442px;top:144.09px;font-size:12.3px;line-height:12.3px;color:#000;">9</div>
<div style="left:0;top:159px;width:543px;height:1px;background:#808080"></div>
<div style="left:0;top:160px;width:543px;height:20px;background:#fff"></div>
<div style="left:1px;top:164.09px;font-size:12.3px;line-height:12.3px;color:#000;">2915</div>
<div style="left:51px;top:164.09px;font-size:12.3px;line-height:12.3px;color:#000;">Hidden</div>
<div style="left:108px;top:164.09px;font-size:12.3px;line-height:12.3px;color:#000;">Hidden</div>
<div style="left:256px;top:164.09px;font-size:12.3px;line-height:12.3px;color:#000;">401787.1</div>
<div style="left:317px;top:164.09px;font-size:12.3px;line-height:12.3px;color:#000;">5062856.7</div>
<div style="left:391px;top:164.09px;font-size:12.3px;line-height:12.3px;color:#000;">248.00</div>
<div style="left:442px;top:164.09px;font-size:12.3px;line-height:12.3px;color:#000;">9</div>
<div style="left:0;top:179px;width:543px;height:1px;background:#808080"></div>
<div style="left:0;top:180px;width:543px;height:20px;background:#fff"></div>
<div style="left:1px;top:184.09px;font-size:12.3px;line-height:12.3px;color:#000;">3211</div>
<div style="left:51px;top:184.09px;font-size:12.3px;line-height:12.3px;color:#000;">Hidden</div>
<div style="left:108px;top:184.09px;font-size:12.3px;line-height:12.3px;color:#000;">Hidden</div>
<div style="left:256px;top:184.09px;font-size:12.3px;line-height:12.3px;color:#000;">400607.3</div>
<div style="left:317px;top:184.09px;font-size:12.3px;line-height:12.3px;color:#000;">5061749.4</div>
<div style="left:391px;top:184.09px;font-size:12.3px;line-height:12.3px;color:#000;">65.80</div>
<div style="left:442px;top:184.09px;font-size:12.3px;line-height:12.3px;color:#000;">9</div>
<div style="left:0;top:199px;width:543px;height:1px;background:#808080"></div>
<div style="left:0;top:200px;width:543px;height:20px;background:#fff"></div>
<div style="left:1px;top:204.09px;font-size:12.3px;line-height:12.3px;color:#ffc20e;">3322</div>
<div style="left:51px;top:204.09px;font-size:12.3px;line-height:12.3px;color:#ffc20e;">Hidden</div>
<div style="left:108px;top:204.09px;font-size:12.3px;line-height:12.3px;color:#ffc20e;">Hidden</div>
<div style="left:256px;top:204.09px;font-size:12.3px;line-height:12.3px;color:#ffc20e;">400250.3</div>
<div style="left:317px;top:204.09px;font-size:12.3px;line-height:12.3px;color:#ffc20e;">5061928.8</div>
<div style="left:391px;top:204.09px;font-size:12.3px;line-height:12.3px;color:#ffc20e;">30.82</div>
<div style="left:442px;top:204.09px;font-size:12.3px;line-height:12.3px;color:#ffc20e;">9</div>
<div style="left:0;top:219px;width:543px;height:1px;background:#808080"></div>
<div style="left:0;top:220px;width:543px;height:20px;background:#fff"></div>
<div style="left:1px;top:224.09px;font-size:12.3px;line-height:12.3px;color:#000;">3332</div>
<div style="left:51px;top:224.09px;font-size:12.3px;line-height:12.3px;color:#000;">Hidden</div>
<div style="left:108px;top:224.09px;font-size:12.3px;line-height:12.3px;color:#000;">Hidden</div>
<div style="left:256px;top:224.09px;font-size:12.3px;line-height:12.3px;color:#000;">401670.1</div>
<div style="left:317px;top:224.09px;font-size:12.3px;line-height:12.3px;color:#000;">5061047.1</div>
<div style="left:391px;top:224.09px;font-size:12.3px;line-height:12.3px;color:#000;">52.00</div>
<div style="left:442px;top:224.09px;font-size:12.3px;line-height:12.3px;color:#000;">9</div>
<div style="left:0;top:239px;width:543px;height:1px;background:#808080"></div>
<div style="left:0;top:240px;width:543px;height:20px;background:#fff"></div>
<div style="left:1px;top:244.09px;font-size:12.3px;line-height:12.3px;color:#000;">3333</div>
<div style="left:51px;top:244.09px;font-size:12.3px;line-height:12.3px;color:#000;">Hidden</div>
<div style="left:108px;top:244.09px;font-size:12.3px;line-height:12.3px;color:#000;">Hidden</div>
<div style="left:256px;top:244.09px;font-size:12.3px;line-height:12.3px;color:#000;">399971.2</div>
<div style="left:317px;top:244.09px;font-size:12.3px;line-height:12.3px;color:#000;">5062752.1</div>
<div style="left:391px;top:244.09px;font-size:12.3px;line-height:12.3px;color:#000;">90.00</div>
<div style="left:442px;top:244.09px;font-size:12.3px;line-height:12.3px;color:#000;">9</div>
<div style="left:0;top:259px;width:543px;height:1px;background:#808080"></div>
<div style="left:0;top:260px;width:543px;height:20px;background:#0078d7"></div>
<div style="left:1px;top:264.09px;font-size:12.3px;line-height:12.3px;color:#000018;">4588</div>
<div style="left:51px;top:264.09px;font-size:12.3px;line-height:12.3px;color:#000018;">Hidden</div>
<div style="left:108px;top:264.09px;font-size:12.3px;line-height:12.3px;color:#000018;">Hidden</div>
<div style="left:256px;top:264.09px;font-size:12.3px;line-height:12.3px;color:#000018;">400396.1</div>
<div style="left:317px;top:264.09px;font-size:12.3px;line-height:12.3px;color:#000018;">5061811.1</div>
<div style="left:391px;top:264.09px;font-size:12.3px;line-height:12.3px;color:#000018;">41.00</div>
<div style="left:442px;top:264.09px;font-size:12.3px;line-height:12.3px;color:#000018;">9</div>
<div style="left:0;top:279px;width:543px;height:1px;background:#808080"></div>
<div style="left:0;top:280px;width:543px;height:20px;background:#0078d7"></div>
<div style="left:1px;top:284.09px;font-size:12.3px;line-height:12.3px;color:#000018;">4662</div>
<div style="left:51px;top:284.09px;font-size:12.3px;line-height:12.3px;color:#000018;">Hidden</div>
<div style="left:108px;top:284.09px;font-size:12.3px;line-height:12.3px;color:#000018;">Hidden</div>
<div style="left:256px;top:284.09px;font-size:12.3px;line-height:12.3px;color:#000018;">401761.8</div>
<div style="left:317px;top:284.09px;font-size:12.3px;line-height:12.3px;color:#000018;">5061853.1</div>
<div style="left:391px;top:284.09px;font-size:12.3px;line-height:12.3px;color:#000018;">257.04</div>
<div style="left:442px;top:284.09px;font-size:12.3px;line-height:12.3px;color:#000018;">9</div>
<div style="left:0;top:299px;width:543px;height:1px;background:#808080"></div>
<div style="left:0;top:300px;width:543px;height:20px;background:#0078d7"></div>
<div style="left:1px;top:304.09px;font-size:12.3px;line-height:12.3px;color:#000018;">4663</div>
<div style="left:51px;top:304.09px;font-size:12.3px;line-height:12.3px;color:#000018;">Hidden</div>
<div style="left:108px;top:304.09px;font-size:12.3px;line-height:12.3px;color:#000018;">Hidden</div>
<div style="left:256px;top:304.09px;font-size:12.3px;line-height:12.3px;color:#000018;">401761.8</div>
<div style="left:317px;top:304.09px;font-size:12.3px;line-height:12.3px;color:#000018;">5061853.1</div>
<div style="left:391px;top:304.09px;font-size:12.3px;line-height:12.3px;color:#000018;">257.04</div>
<div style="left:442px;top:304.09px;font-size:12.3px;line-height:12.3px;color:#000018;">9</div>
<div style="left:0;top:319px;width:543px;height:1px;background:#808080"></div>
<div style="left:0;top:320px;width:543px;height:20px;background:#fff"></div>
<div style="left:1px;top:324.09px;font-size:12.3px;line-height:12.3px;color:#000;">4729</div>
<div style="left:51px;top:324.09px;font-size:12.3px;line-height:12.3px;color:#000;">Hidden</div>
<div style="left:108px;top:324.09px;font-size:12.3px;line-height:12.3px;color:#000;">Hidden</div>
<div style="left:256px;top:324.09px;font-size:12.3px;line-height:12.3px;color:#000;">401752.0</div>
<div style="left:317px;top:324.09px;font-size:12.3px;line-height:12.3px;color:#000;">5061944.1</div>
<div style="left:391px;top:324.09px;font-size:12.3px;line-height:12.3px;color:#000;">252.50</div>
<div style="left:442px;top:324.09px;font-size:12.3px;line-height:12.3px;color:#000;">9</div>
<div style="left:0;top:339px;width:543px;height:1px;background:#808080"></div>
<div style="left:0;top:340px;width:543px;height:20px;background:#fff"></div>
<div style="left:1px;top:344.09px;font-size:12.3px;line-height:12.3px;color:#000;">4781</div>
<div style="left:51px;top:344.09px;font-size:12.3px;line-height:12.3px;color:#000;">Hidden</div>
<div style="left:108px;top:344.09px;font-size:12.3px;line-height:12.3px;color:#000;">Hidden</div>
<div style="left:256px;top:344.09px;font-size:12.3px;line-height:12.3px;color:#000;">400396.1</div>
<div style="left:317px;top:344.09px;font-size:12.3px;line-height:12.3px;color:#000;">5061811.1</div>
<div style="left:391px;top:344.09px;font-size:12.3px;line-height:12.3px;color:#000;">41.47</div>
<div style="left:442px;top:344.09px;font-size:12.3px;line-height:12.3px;color:#000;">9</div>
<div style="left:0;top:359px;width:543px;height:1px;background:#808080"></div>
<div style="left:0;top:360px;width:543px;height:20px;background:#fff"></div>
<div style="left:1px;top:364.09px;font-size:12.3px;line-height:12.3px;color:#000;">5716</div>
<div style="left:51px;top:364.09px;font-size:12.3px;line-height:12.3px;color:#000;">Hidden</div>
<div style="left:108px;top:364.09px;font-size:12.3px;line-height:12.3px;color:#000;">Hidden</div>
<div style="left:256px;top:364.09px;font-size:12.3px;line-height:12.3px;color:#000;">401761.8</div>
<div style="left:317px;top:364.09px;font-size:12.3px;line-height:12.3px;color:#000;">5061853.1</div>
<div style="left:391px;top:364.09px;font-size:12.3px;line-height:12.3px;color:#000;">257.04</div>
<div style="left:442px;top:364.09px;font-size:12.3px;line-height:12.3px;color:#000;">9</div>
<div style="left:0;top:379px;width:543px;height:1px;background:#808080"></div>
<div style="left:0;top:380px;width:543px;height:20px;background:#fff"></div>
<div style="left:1px;top:384.09px;font-size:12.3px;line-height:12.3px;color:#000;">5731</div>
<div style="left:51px;top:384.09px;font-size:12.3px;line-height:12.3px;color:#000;">Hidden</div>
<div style="left:108px;top:384.09px;font-size:12.3px;line-height:12.3px;color:#000;">Hidden</div>
<div style="left:256px;top:384.09px;font-size:12.3px;line-height:12.3px;color:#000;">401752.0</div>
<div style="left:317px;top:384.09px;font-size:12.3px;line-height:12.3px;color:#000;">5061944.1</div>
<div style="left:391px;top:384.09px;font-size:12.3px;line-height:12.3px;color:#000;">252.50</div>
<div style="left:442px;top:384.09px;font-size:12.3px;line-height:12.3px;color:#000;">9</div>
<div style="left:0;top:399px;width:543px;height:1px;background:#808080"></div>
<div style="left:0;top:400px;width:543px;height:20px;background:#fff"></div>
<div style="left:1px;top:404.09px;font-size:12.3px;line-height:12.3px;color:#000;">5768</div>
<div style="left:51px;top:404.09px;font-size:12.3px;line-height:12.3px;color:#000;">Hidden</div>
<div style="left:108px;top:404.09px;font-size:12.3px;line-height:12.3px;color:#000;">Hidden</div>
<div style="left:256px;top:404.09px;font-size:12.3px;line-height:12.3px;color:#000;">400396.9</div>
<div style="left:317px;top:404.09px;font-size:12.3px;line-height:12.3px;color:#000;">5061806.6</div>
<div style="left:391px;top:404.09px;font-size:12.3px;line-height:12.3px;color:#000;">41.47</div>
<div style="left:442px;top:404.09px;font-size:12.3px;line-height:12.3px;color:#000;">9</div>
<div style="left:0;top:419px;width:543px;height:1px;background:#808080"></div>
<div style="left:0;top:420px;width:543px;height:20px;background:#fff"></div>
<div style="left:1px;top:424.09px;font-size:12.3px;line-height:12.3px;color:#ffc20e;">5771</div>
<div style="left:51px;top:424.09px;font-size:12.3px;line-height:12.3px;color:#ffc20e;">Hidden</div>
<div style="left:108px;top:424.09px;font-size:12.3px;line-height:12.3px;color:#ffc20e;">Hidden</div>
<div style="left:256px;top:424.09px;font-size:12.3px;line-height:12.3px;color:#ffc20e;">400396.9</div>
<div style="left:317px;top:424.09px;font-size:12.3px;line-height:12.3px;color:#ffc20e;">5061806.6</div>
<div style="left:391px;top:424.09px;font-size:12.3px;line-height:12.3px;color:#ffc20e;">41.47</div>
<div style="left:442px;top:424.09px;font-size:12.3px;line-height:12.3px;color:#ffc20e;">9</div>
<div style="left:0;top:439px;width:543px;height:1px;background:#808080"></div>
<div style="left:0;top:440px;width:543px;height:20px;background:#0078d7"></div>
<div style="left:1px;top:444.09px;font-size:12.3px;line-height:12.3px;color:#000018;">5810</div>
<div style="left:51px;top:444.09px;font-size:12.3px;line-height:12.3px;color:#000018;">Hidden</div>
<div style="left:108px;top:444.09px;font-size:12.3px;line-height:12.3px;color:#000018;">Hidden</div>
<div style="left:256px;top:444.09px;font-size:12.3px;line-height:12.3px;color:#000018;">401319.0</div>
<div style="left:317px;top:444.09px;font-size:12.3px;line-height:12.3px;color:#000018;">5062485.4</div>
<div style="left:391px;top:444.09px;font-size:12.3px;line-height:12.3px;color:#000018;">247.50</div>
<div style="left:442px;top:444.09px;font-size:12.3px;line-height:12.3px;color:#000018;">9</div>
<div style="left:0;top:459px;width:543px;height:1px;background:#808080"></div>
<div style="left:0;top:460px;width:543px;height:20px;background:#fff"></div>
<div style="left:1px;top:464.09px;font-size:12.3px;line-height:12.3px;color:#000;">5816</div>
<div style="left:51px;top:464.09px;font-size:12.3px;line-height:12.3px;color:#000;">Hidden</div>
<div style="left:108px;top:464.09px;font-size:12.3px;line-height:12.3px;color:#000;">Hidden</div>
<div style="left:256px;top:464.09px;font-size:12.3px;line-height:12.3px;color:#000;">399720.2</div>
<div style="left:317px;top:464.09px;font-size:12.3px;line-height:12.3px;color:#000;">5062089.1</div>
<div style="left:391px;top:464.09px;font-size:12.3px;line-height:12.3px;color:#000;">1.87</div>
<div style="left:442px;top:464.09px;font-size:12.3px;line-height:12.3px;color:#000;">9</div>
<div style="left:0;top:479px;width:543px;height:1px;background:#808080"></div>
<div style="left:49px;top:0;width:1px;height:469px;background:#808080"></div>
<div style="left:106px;top:0;width:1px;height:469px;background:#808080"></div>
<div style="left:169px;top:0;width:1px;height:469px;background:#808080"></div>
<div style="left:254px;top:0;width:1px;height:469px;background:#808080"></div>
<div style="left:315px;top:0;width:1px;height:469px;background:#808080"></div>
<div style="left:389px;top:0;width:1px;height:469px;background:#808080"></div>
<div style="left:440px;top:0;width:1px;height:469px;background:#808080"></div>
<div style="left:501px;top:0;width:1px;height:469px;background:#808080"></div>
<div style="left:542px;top:0;width:1px;height:469px;background:#808080"></div>
<div style="left:170px;top:440px;width:84px;height:19px;border:1px dashed #ff8c10;box-sizing:border-box"></div>
</div>
<div style="left:901px;top:403px;width:2px;height:469px;background:#6d6d6d"></div>
<div style="left:919px;top:403px;width:21px;height:469px;background:#f0f0f0;border-left:1px solid #fff;box-sizing:border-box"></div>
<div style="left:920px;top:425px;width:19px;height:207px;background:#cdcdcd"></div>
<div style="left:940px;top:372px;width:1px;height:501px;background:#6e737b"></div>
<svg style="left:923px;top:408px" width="14" height="14" viewBox="0 0 14 14"><path d="M3.3 9.6 L7 3.8 L10.7 9.6" stroke="#555" stroke-width="1.8" fill="none"/></svg>
<svg style="left:923px;top:855px" width="14" height="14" viewBox="0 0 14 14"><path d="M3.3 4.6 L7 9.2 L10.7 4.6" stroke="#555" stroke-width="1.8" fill="none"/></svg>
<div style="left:358px;top:872px;width:583px;height:1px;background:#828790"></div>
<div style="left:359px;top:874px;width:64px;height:37px;background:#e1e1e1;border:1px solid #adadad;box-sizing:border-box"></div>
<div style="left:359px;top:887.33px;font-size:12.6px;line-height:12.6px;color:#000;width:64px;text-align:center;">Tutti</div>
<div style="left:611px;top:881px;width:55px;height:24px;background:#e1e1e1;border:1px solid #adadad;box-sizing:border-box"></div>
<div style="left:611px;top:887.33px;font-size:12.6px;line-height:12.6px;color:#000;width:55px;text-align:center;">Ok</div>
<div style="left:854px;top:874px;width:87px;height:37px;background:#e1e1e1;border:1px solid #adadad;box-sizing:border-box"></div>
<div style="left:854px;top:887.33px;font-size:12.6px;line-height:12.6px;color:#000;width:87px;text-align:center;">Nessuno</div>
</body></html>
